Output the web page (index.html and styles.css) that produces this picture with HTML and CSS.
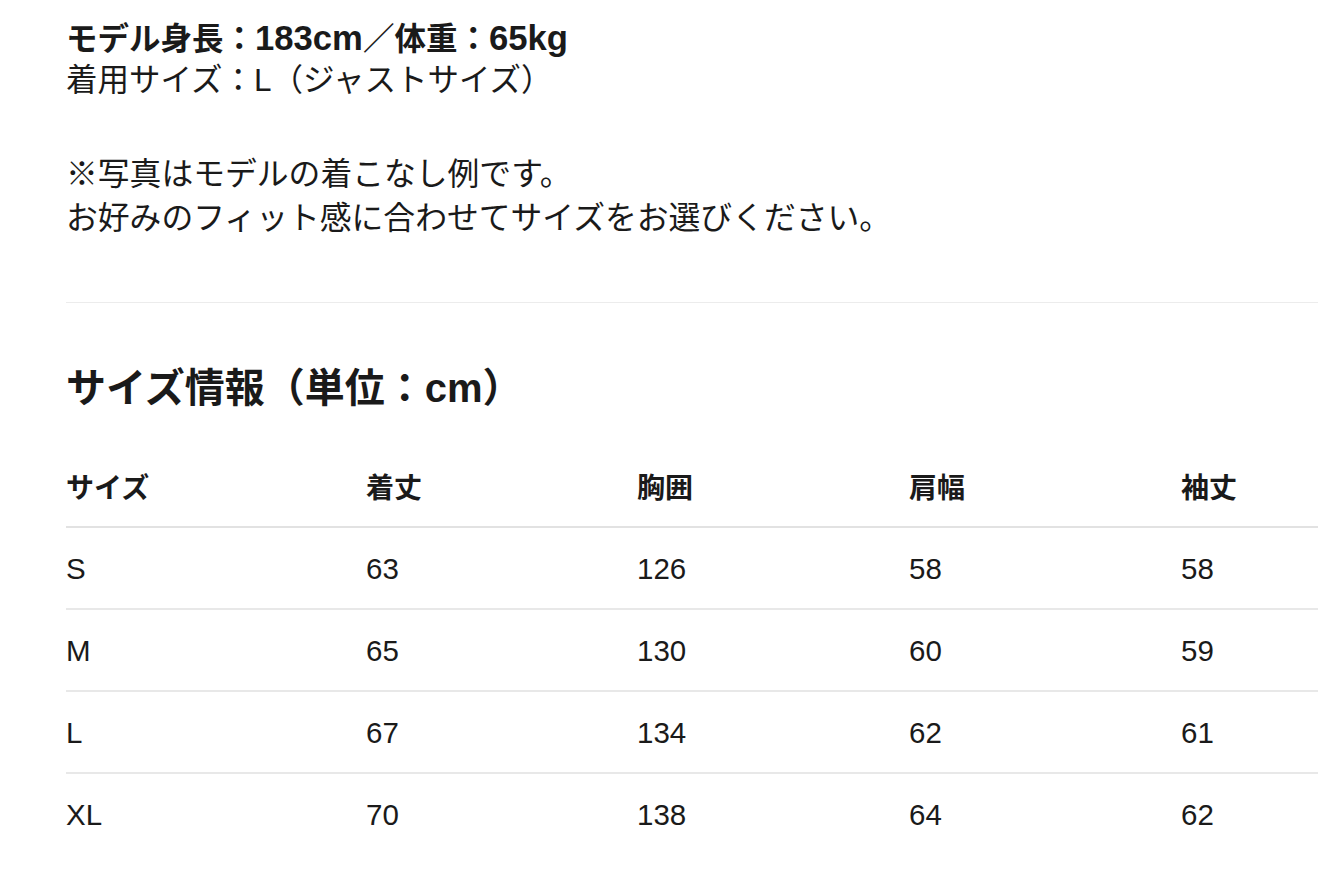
FILE: index.html
```html
<!DOCTYPE html>
<html lang="ja">
<head>
<meta charset="utf-8">
<title>サイズ情報</title>
<link rel="stylesheet" href="styles.css">
</head>
<body>
<main class="page">
  <section class="model">
    <p class="model-info"><strong>モデル身長：<span class="latin">183cm</span>／体重：<span class="latin">65kg</span></strong><br>着用サイズ：L（ジャストサイズ）</p>
    <p class="note">※写真はモデルの着こなし例です。<br>お好みのフィット感に合わせてサイズをお選びください。</p>
  </section>
  <hr class="divider">
  <section class="size">
    <h2 class="size-title">サイズ情報（単位：cm）</h2>
    <table class="size-table">
      <thead>
        <tr><th>サイズ</th><th>着丈</th><th>胸囲</th><th>肩幅</th><th>袖丈</th></tr>
      </thead>
      <tbody>
        <tr><td>S</td><td>63</td><td>126</td><td>58</td><td>58</td></tr>
        <tr><td>M</td><td>65</td><td>130</td><td>60</td><td>59</td></tr>
        <tr><td>L</td><td>67</td><td>134</td><td>62</td><td>61</td></tr>
        <tr><td>XL</td><td>70</td><td>138</td><td>64</td><td>62</td></tr>
      </tbody>
    </table>
  </section>
</main>
</body>
</html>
```
FILE: styles.css
```css
* { box-sizing: border-box; }
html, body { margin: 0; padding: 0; background: #fff; }
body {
  font-family: "Liberation Sans", "Noto Sans CJK JP", sans-serif;
  color: #1a1a1a;
}
.page {
  padding: 19px 0 0 66px;
}
.model p {
  margin: 0;
  font-size: 31.5px;
}
.model-info {
  line-height: 41px;
}
.model-info strong { font-weight: 700; }
.latin {
  font-size: 1.1em;
  line-height: 1;
}
.note {
  margin-top: 51px !important;
  line-height: 44px;
  font-size: 31.8px !important;
}
.divider {
  border: 0;
  border-top: 1px solid #ececec;
  margin: 62px 0 0 0;
  height: 0;
}
.size-title {
  margin: 60px 0 0 0;
  font-size: 40px;
  line-height: 50px;
  font-weight: 700;
}
.size-table {
  margin-top: 33px;
  width: 100%;
  border-collapse: collapse;
  table-layout: fixed;
}
.size-table th:nth-child(1) { width: 300px; }
.size-table th:nth-child(2) { width: 271px; }
.size-table th:nth-child(3) { width: 272px; }
.size-table th:nth-child(4) { width: 272px; }
.size-table th,
.size-table td {
  text-align: left;
  padding: 0;
  vertical-align: middle;
}
.size-table th {
  font-size: 28px;
  font-weight: 700;
  height: 81px;
  border-bottom: 2px solid #e2e2e2;
}
.size-table td {
  font-size: 29.5px;
  font-weight: 400;
  height: 82px;
  padding-top: 1px;
  border-bottom: 2px solid #e8e8e8;
}
.size-table tbody tr:last-child td {
  border-bottom: 0;
}
```
